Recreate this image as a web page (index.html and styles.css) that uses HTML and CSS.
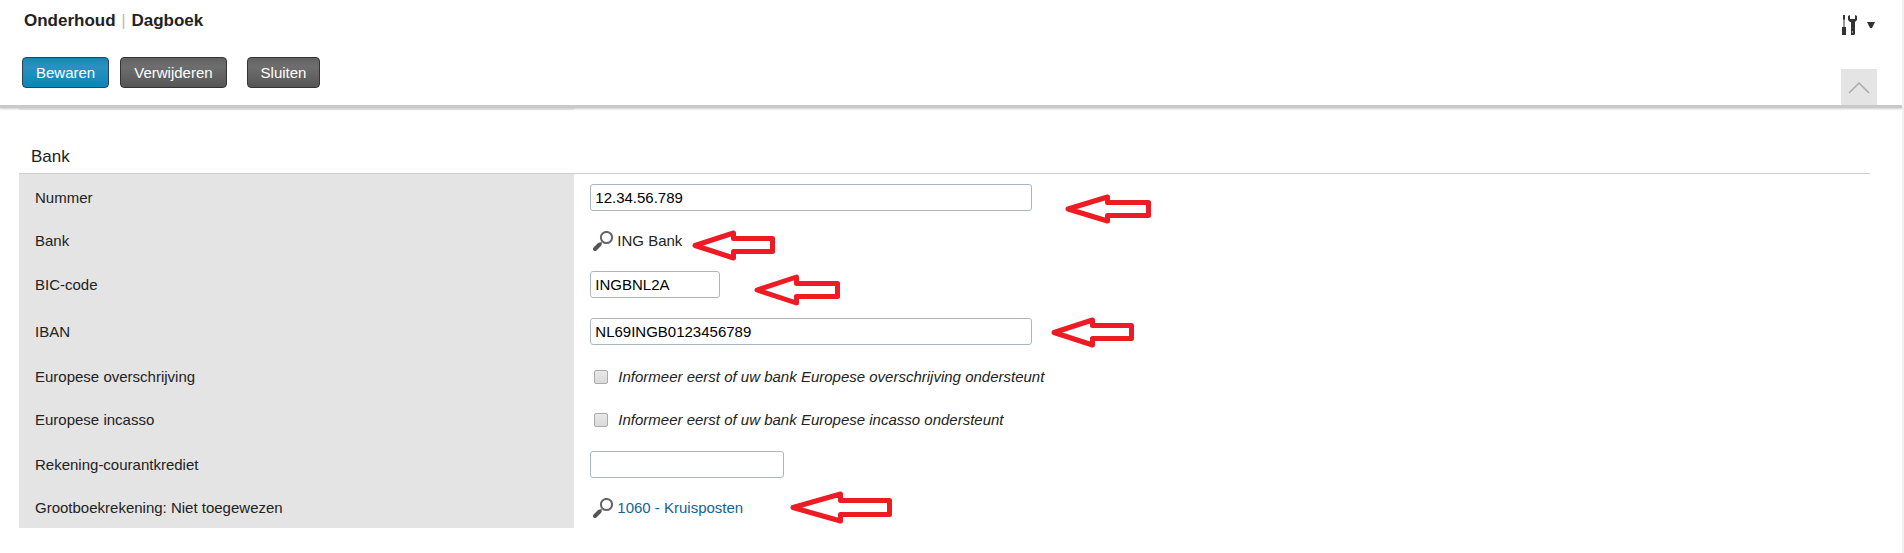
FILE: index.html
```
<!DOCTYPE html>
<html lang="nl">
<head>
    <meta charset="UTF-8">
    <meta name="viewport" content="width=device-width, initial-scale=1.0">
    <title>Onderhoud | Dagboek</title>
    <link rel="stylesheet" href="styles.css">
</head>
<body>
    <header class="header">
        <div class="title-bar">
            <h1>Onderhoud <span class="divider">|</span> Dagboek</h1>
            <button type="button" class="tools-button" aria-label="Extra">
                <svg width="16" height="20" viewBox="0 0 16 20">
                    <path d="M1 0h2v4l-.5 1v7h-1V5L1 4zM0 12h4v8H0z" fill="#333"/>
                    <path d="M6 1l2-1v4h5V0l2 1v4l-2 2v12l-1 1H9V7H8L6 5z" fill="#333"/>
                    <path d="M10 16h1v2h-1z" fill="#999"/>
                </svg>
                <svg width="8" height="6" viewBox="0 0 8 6"><path d="M0 0h8L5 6H3z" fill="#333"/></svg>
            </button>
        </div>
        <div class="button-bar">
            <div class="buttons">
                <button type="submit" form="journal" class="button primary">Bewaren</button>
                <button type="button" class="button">Verwijderen</button>
                <button type="button" class="button close">Sluiten</button>
            </div>
            <button type="button" class="collapse-button" aria-label="Inklappen">
                <svg width="22" height="13" viewBox="0 0 22 13"><path d="M1 12L11 2l10 10" fill="none" stroke="#aaa" stroke-width="1.500"/></svg>
            </button>
        </div>
    </header>

    <main class="content">
        <div class="previous-section"></div>
        <h2>Bank</h2>
        <form id="journal" class="form">
            <div class="row input-row">
                <label class="label" for="number">Nummer</label>
                <div class="field">
                    <input type="text" id="number" class="text-input wide" value="12.34.56.789">
                    <svg class="arrow arrow-number" width="86" height="30" viewBox="0 0 86 30"><path d="M3 15L42.500 3v5.500h41v13h-41V27z"/></svg>
                </div>
            </div>
            <div class="row lookup-row">
                <span class="label">Bank</span>
                <div class="field">
                    <button type="button" class="lookup" aria-label="Bank zoeken">
                        <svg width="20" height="20" viewBox="0 0 20 20"><circle cx="13.500" cy="6.500" r="5.600"/><path class="neck" d="M9.500 10.500L7 13"/><path class="handle" d="M6.500 13.500L2 18"/></svg>
                    </button>
                    <span>ING Bank</span>
                    <svg class="arrow arrow-bank" width="83" height="31" viewBox="0 0 83 31"><path d="M3 15.500L41.500 3v5.500h39v13h-39V28z"/></svg>
                </div>
            </div>
            <div class="row input-row">
                <label class="label" for="bic">BIC-code</label>
                <div class="field">
                    <input type="text" id="bic" class="text-input small" value="INGBNL2A">
                    <svg class="arrow arrow-bic" width="86" height="32" viewBox="0 0 86 32"><path d="M3 16L42.500 3v6.500h41v13h-41V29z"/></svg>
                </div>
            </div>
            <div class="row input-row">
                <label class="label" for="iban">IBAN</label>
                <div class="field">
                    <input type="text" id="iban" class="text-input wide" value="NL69INGB0123456789">
                    <svg class="arrow arrow-iban" width="83" height="31" viewBox="0 0 83 31"><path d="M3 15.500L41.500 3v5.500h39v13h-39V28z"/></svg>
                </div>
            </div>
            <div class="row check-row">
                <label class="label" for="transfer">Europese overschrijving</label>
                <div class="field">
                    <input type="checkbox" id="transfer" class="checkbox">
                    <label class="hint" for="transfer">Informeer eerst of uw bank Europese overschrijving ondersteunt</label>
                </div>
            </div>
            <div class="row check-row">
                <label class="label" for="debit">Europese incasso</label>
                <div class="field">
                    <input type="checkbox" id="debit" class="checkbox">
                    <label class="hint" for="debit">Informeer eerst of uw bank Europese incasso ondersteunt</label>
                </div>
            </div>
            <div class="row input-row">
                <label class="label" for="credit">Rekening-courantkrediet</label>
                <div class="field">
                    <input type="text" id="credit" class="text-input medium">
                </div>
            </div>
            <div class="row lookup-row">
                <span class="label">Grootboekrekening: Niet toegewezen</span>
                <div class="field">
                    <button type="button" class="lookup" aria-label="Grootboekrekening zoeken">
                        <svg width="20" height="20" viewBox="0 0 20 20"><circle cx="13.500" cy="6.500" r="5.600"/><path class="neck" d="M9.500 10.500L7 13"/><path class="handle" d="M6.500 13.500L2 18"/></svg>
                    </button>
                    <a href="#">1060 - Kruisposten</a>
                    <svg class="arrow arrow-ledger" width="102" height="33" viewBox="0 0 102 33"><path d="M3 16.500L50.500 3v6.500h49v14h-49V30z"/></svg>
                </div>
            </div>
        </form>
    </main>
</body>
</html>
```
FILE: styles.css
```
* { box-sizing: border-box; }
html { background: #fff; }
body { margin: 0; min-height: 100vh; border-right: 2px solid #f0f0f0; font-family: Arial, "Liberation Sans", sans-serif; font-size: 15px; line-height: 18px; color: #222; background: #fff; }
button { font: inherit; cursor: pointer; }

.header { position: relative; background: #fff; box-shadow: 0 3px 0 #c9c9c9, 0 4px 2px #ccc; }
.title-bar { display: flex; justify-content: space-between; align-items: flex-start; padding: 11px 27px 0 24px; height: 57px; }
h1 { margin: 0; font-size: 17px; line-height: 20px; font-weight: bold; }
.divider { margin: 0 1px; font-weight: normal; color: #bbb; }
.tools-button { display: flex; align-items: center; gap: 9px; margin-top: 4px; padding: 0; border: 0; background: none; }
.button-bar { display: flex; justify-content: space-between; padding: 0 25px 0 22px; height: 48px; }
.buttons { display: flex; align-items: flex-start; gap: 11px; }
.button { height: 31px; padding: 0 13px; border: 1px solid #333; border-radius: 4px; color: #fff; background: linear-gradient(#626262, #6e6e6e 30%, #565656); }
.button.primary { border-color: #2c4250; background: linear-gradient(#1486b8, #2b92bf 30%, #0a86b8); }
.button.close { margin-left: 9px; }
.collapse-button { display: flex; justify-content: center; align-items: center; align-self: flex-end; width: 36px; height: 36px; padding: 0; border: 0; background: #e4e4e4; }

.content { padding: 0 32px 20px 19px; }
.previous-section { width: 30%; height: 5px; background: #e4e4e4; }
h2 { margin: 0; padding: 36px 12px 6px; border-bottom: 1px solid #ccc; font-size: 17px; line-height: 21px; font-weight: normal; }
.row { display: flex; }
.input-row { height: 47px; }
.lookup-row { height: 40px; }
.check-row { height: 43px; }
.label { display: flex; align-items: center; width: 30%; padding-left: 16px; background: #e4e4e4; }
.field { position: relative; display: flex; align-items: center; flex: 1; padding-left: 16px; }
.text-input { height: 27px; padding: 0 4px; border: 1px solid #aab7c1; border-radius: 3px; font: inherit; color: #000; background: #fff; }
.wide { width: 442px; }
.medium { width: 194px; }
.small { width: 130px; }
.lookup { display: flex; margin: 0 4px 0 3px; padding: 0; border: 0; background: none; }
.lookup svg { fill: none; stroke: #666; stroke-width: 2; }
.lookup .neck { stroke: #888; }
.lookup .handle { stroke: #555; stroke-width: 4; stroke-linecap: round; }
.checkbox { appearance: none; width: 14px; height: 14px; margin: 0 10px 0 4px; border: 1px solid #aaa; border-radius: 2px; background: linear-gradient(#e8e8e8, #dadada); }
.checkbox:checked { background: #666; }
.hint { font-style: italic; }
a { color: #10649a; text-decoration: none; }
a:hover { text-decoration: underline; }

/* red pointers next to the fields */
.arrow { position: absolute; fill: #fff; stroke: #ed1c24; stroke-width: 5; stroke-linejoin: round; pointer-events: none; }
.arrow-number { left: 491px; top: 20px; }
.arrow-bank { left: 118px; top: 9px; }
.arrow-bic { left: 180px; top: 13px; }
.arrow-iban { left: 477px; top: 9px; }
.arrow-ledger { left: 216px; top: 3px; }
```
